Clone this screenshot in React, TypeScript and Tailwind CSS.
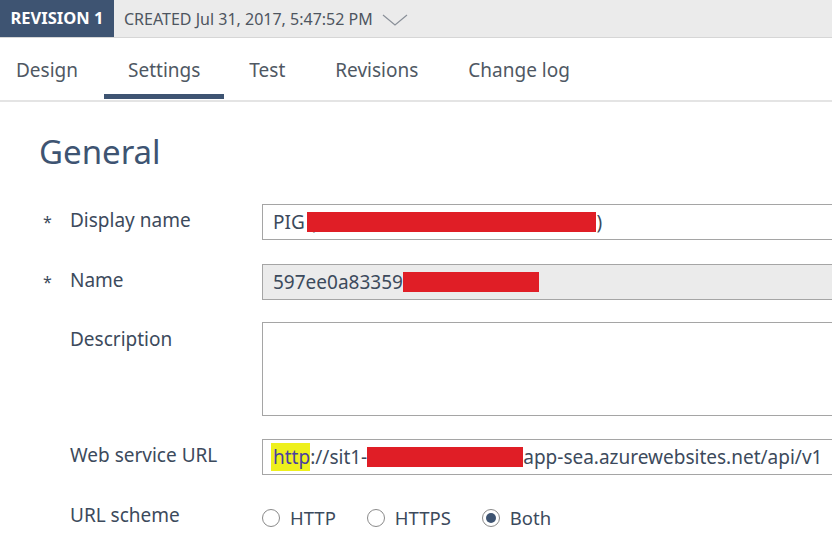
import React from "react";

const font = { fontFamily: '"Noto Sans", "Open Sans", sans-serif' };

function Radio({ label, checked }: { label: string; checked?: boolean }) {
  return (
    <div className="flex items-center shrink-0">
      <span className="w-[18px] h-[18px] rounded-full border border-[#8a8a8a] bg-white flex items-center justify-center">
        {checked && <span className="w-[10px] h-[10px] rounded-full bg-[#3e5472]" />}
      </span>
      <span className="ml-[10px] text-[18.5px] text-[#3c4a5c]">{label}</span>
    </div>
  );
}

export default function App() {
  return (
    <div className="w-[832px] h-[537px] overflow-hidden bg-white" style={font}>
      {/* top bar */}
      <div className="flex h-[38px] bg-[#ebebeb] border-b border-[#d6d6d6]">
        <div className="w-[114px] shrink-0 bg-[#3e5472] text-white font-bold text-[16.5px] flex items-center justify-center">
          REVISION 1
        </div>
        <div className="flex items-center pl-[10px] text-[16px] text-[#4e5560] whitespace-nowrap">
          <span>CREATED Jul 31, 2017, 5:47:52 PM</span>
          <svg width="26" height="14" viewBox="0 0 26 14" className="ml-[9px] mt-[2px]">
            <path d="M1 2 L13 12 L25 2" fill="none" stroke="#8a9099" strokeWidth="1.2" />
          </svg>
        </div>
      </div>

      {/* tabs */}
      <div className="flex h-[64px] border-b-2 border-[#e4e4e4] text-[19px] text-[#4f5863] whitespace-nowrap">
        <div className="pl-[16px] pr-[26px] flex items-center mt-[2px]">Design</div>
        <div className="relative px-[24px] flex items-center">
          <span className="mt-[2px]">Settings</span>
          <span className="absolute left-0 right-0 bottom-[1px] h-[5px] bg-[#3e5472]" />
        </div>
        <div className="px-[25px] flex items-center mt-[2px]">Test</div>
        <div className="px-[25px] flex items-center mt-[2px]">Revisions</div>
        <div className="px-[25px] flex items-center mt-[2px]">Change log</div>
      </div>

      {/* content */}
      <div className="pl-[39px]">
        <div className="mt-[28px] text-[33px] leading-[44px] text-[#3e5472]">General</div>

        <div className="mt-[30px] flex flex-col text-[19px] text-[#3c4a5c] whitespace-nowrap">
          <div className="flex items-center h-[36px]">
            <span className="w-[31px] shrink-0 pl-[4px] text-[16px]">*</span>
            <span className="w-[192px] shrink-0 -mt-[3px]">Display name</span>
            <div className="w-[640px] shrink-0 h-[36px] border border-[#a5a5a5] bg-white flex items-center pl-[10px]">
              <span>PIG (</span>
              <span className="w-[289px] h-[20px] bg-[#e01e26] shrink-0 -ml-[8px]" />
              <span>)</span>
            </div>
          </div>

          <div className="flex items-center h-[36px] mt-[24px]">
            <span className="w-[31px] shrink-0 pl-[4px] text-[16px]">*</span>
            <span className="w-[192px] shrink-0 -mt-[3px]">Name</span>
            <div className="w-[640px] shrink-0 h-[36px] border border-[#a5a5a5] bg-[#ebebeb] flex items-center pl-[10px]">
              <span>597ee0a83359</span>
              <span className="w-[136px] h-[20px] bg-[#e01e26] shrink-0" />
            </div>
          </div>

          <div className="flex items-start h-[94px] mt-[22px]">
            <span className="w-[31px] shrink-0" />
            <span className="w-[192px] shrink-0 mt-[3px]">Description</span>
            <div className="w-[640px] shrink-0 h-[94px] border border-[#a5a5a5] bg-white" />
          </div>

          <div className="flex items-center h-[36px] mt-[23px]">
            <span className="w-[31px] shrink-0" />
            <span className="w-[192px] shrink-0 -mt-[3px]">Web service URL</span>
            <div className="w-[640px] shrink-0 h-[36px] border border-[#a5a5a5] bg-white flex items-center pl-[8px]">
              <span className="bg-[#eef01c] text-[#4a3fa0] pl-[2px]">http</span>
              <span>://sit1-</span>
              <span className="w-[156px] h-[20px] bg-[#e01e26] shrink-0" />
              <span>app-sea.azurewebsites.net/api/v1</span>
            </div>
          </div>

          <div className="flex items-center h-[36px] mt-[25px]">
            <span className="w-[31px] shrink-0" />
            <span className="w-[192px] shrink-0 -mt-[6px]">URL scheme</span>
            <div className="flex items-center gap-[31px]">
              <Radio label="HTTP" />
              <Radio label="HTTPS" />
              <Radio label="Both" checked />
            </div>
          </div>
        </div>
      </div>
    </div>
  );
}
